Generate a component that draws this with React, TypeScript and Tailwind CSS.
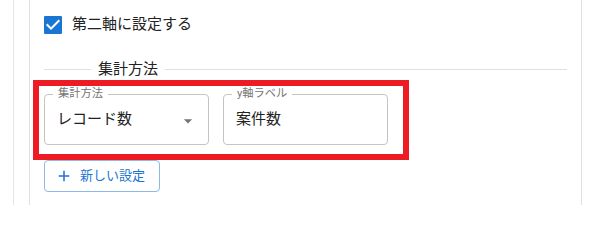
import React from "react";

const font = { fontFamily: 'Roboto, "Noto Sans CJK JP", "Noto Sans", sans-serif' };

function Field({ label, value, select }: { label: string; value: string; select?: boolean }) {
  return (
    <div className="relative w-[165px] h-[51px] rounded-[4px] border border-[#c4c4c4] flex items-center pl-[12px] pr-[10px]">
      <span className="absolute left-[8px] top-[-7px] bg-white px-[5px] text-[11.25px] leading-[12px] text-[#757575]">
        {label}
      </span>
      <span className="flex-1 text-[15px] text-[#222]">{value}</span>
      {select && (
        <svg width="20" height="20" viewBox="0 0 24 24" className="mt-[2px]">
          <path d="M7 10l5 5 5-5z" fill="#757575" />
        </svg>
      )}
    </div>
  );
}

export default function App() {
  return (
    <div className="relative w-[592px] h-[205px] bg-white overflow-hidden flex" style={font}>
      <div className="ml-[13px] w-px h-full bg-[#e6e6e6]" />
      <div className="ml-[15px] w-[553px] h-full border-x border-[#e0e0e0] px-[14px] pt-[12px]">
        <div className="flex items-center h-[25px]">
          <svg width="24" height="24" viewBox="0 0 24 24" className="ml-[-3px]">
            <path d="M4 3h16a1 1 0 0 1 1 1v16a1 1 0 0 1-1 1H4a1 1 0 0 1-1-1V4a1 1 0 0 1 1-1z" fill="#1976d2" />
            <path d="M10 17l-5-5 1.41-1.41L10 14.17l7.59-7.59L19 8l-9 9z" fill="#fff" />
          </svg>
          <span className="ml-[7px] text-[15px] text-[#222]">第二軸に設定する</span>
        </div>
        <div className="mt-[22px] h-[20px] flex items-center">
          <div className="w-[47px] h-px bg-[#e0e0e0]" />
          <span className="px-[7px] text-[15px] text-[#222] leading-[20px]">集計方法</span>
          <div className="flex-1 h-px bg-[#e0e0e0]" />
        </div>
        <div className="mt-[15px] flex gap-[14px]">
          <Field label="集計方法" value="レコード数" select />
          <Field label="y軸ラベル" value="案件数" />
        </div>
        <button className="mt-[15px] w-[116px] h-[32px] rounded-[4px] border border-[#8cbae8] flex items-center pl-[10px] text-[13px] text-[#1976d2]">
          <svg width="18" height="18" viewBox="0 0 24 24">
            <path d="M19 13h-6v6h-2v-6H5v-2h6V5h2v6h6v2z" fill="#1976d2" />
          </svg>
          <span className="ml-[7px]">新しい設定</span>
        </button>
      </div>
      <div className="absolute left-[33px] top-[80px] w-[376px] h-[80px] border-[6px] border-[#ed1c24]" />
    </div>
  );
}
